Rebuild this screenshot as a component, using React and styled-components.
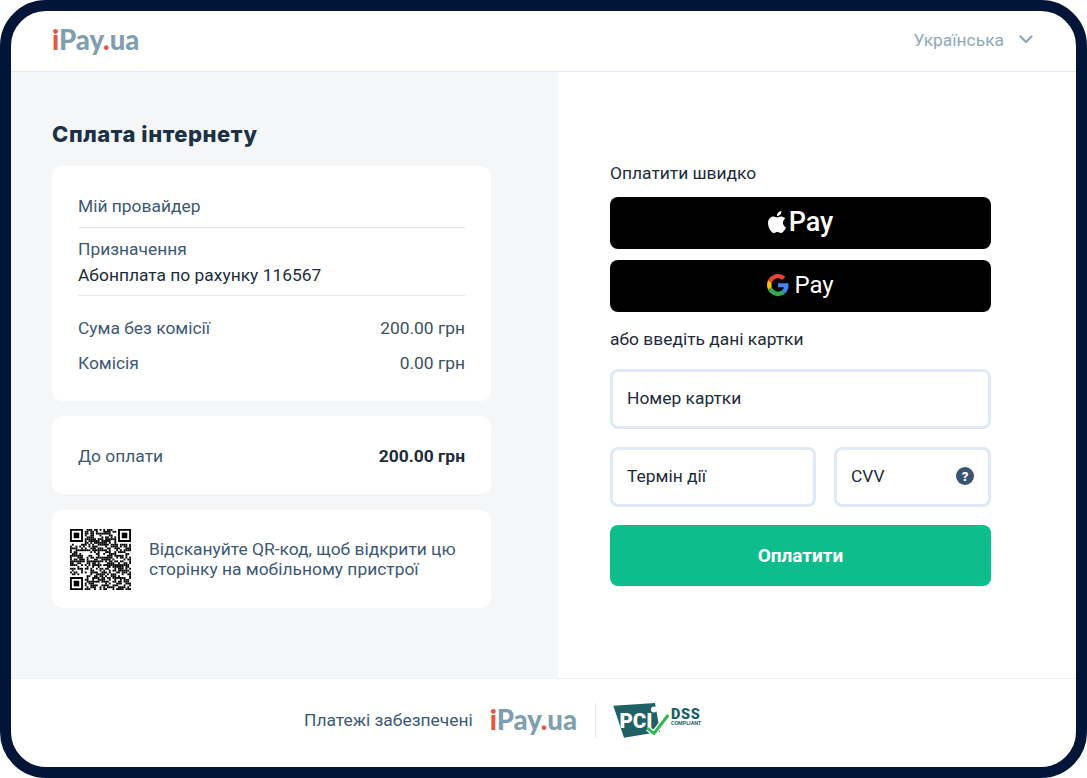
import React from "react";
import styled, { createGlobalStyle } from "styled-components";

const Global = createGlobalStyle`
  html, body { margin: 0; padding: 0; background: #fff; }
  * { box-sizing: border-box; }
  body { font-family: Roboto, "Liberation Sans", sans-serif; color: #1d2b3a; }
`;
const Frame = styled.div`
  width: 1087px; height: 778px; border: 11px solid #001537; border-radius: 46px;
  display: flex; flex-direction: column; overflow: hidden; background: #fff;
`;
const Header = styled.header`
  height: 61px; flex: none; border-bottom: 1px solid #e0e7ee; display: flex;
  align-items: center; justify-content: space-between; padding: 0 43px 3px 41px;
`;
const LogoText = styled.span`
  font-family: Lato, "Noto Sans", sans-serif; font-weight: 900; font-size: 27.500px;
  color: #7f9fb0; line-height: 1;
  b { color: #e8553b; font-weight: 900; }
`;
const Lang = styled.div`
  display: flex; align-items: center; gap: 15px; font-size: 17.400px; color: #8fa9b9;
`;
const Body = styled.main`flex: 1; display: flex; min-height: 0;`;
const Left = styled.section`
  width: 547px; background: #f5f6f8; padding: 49px 67px 0 41px; display: flex; flex-direction: column;
`;
const Title = styled.h1`
  margin: 0 0 19px; font-family: Inter, sans-serif; font-size: 22px; line-height: 26px; font-weight: 800;
  color: #1b3246; letter-spacing: .55px;
`;
const Card = styled.div`
  background: #fff; border-radius: 10px; padding: 0 26px; margin-bottom: ${p => p.$mb}px;
`;
const Row = styled.div`
  display: flex; justify-content: space-between; align-items: center; font-size: 17.400px; line-height: 24px;
  color: #3d5873; height: ${p => p.$h}px; padding: ${p => p.$pad || 0};
  margin-top: ${p => p.$mt || 0}px;
`;
const Divided = styled.div`
  border-bottom: 1px solid #e3e8ed; padding: ${p => p.$pad};
`;
const Label = styled.div`font-size: 17.400px; line-height: 24px; color: #3d5873;`;
const Value = styled.div`font-size: 17.400px; line-height: 28px; color: #1d2b3a;`;
const Strong = styled.span`font-weight: 700; color: #1d2b3a;`;
const Amount = styled.span`color: #3d4f60;`;
const QrCard = styled.div`
  display: flex; align-items: center; gap: 18px; height: 98px; padding: 0 18px; background: #fff; border-radius: 10px;
`;
const QrText = styled.div`font-size: 17.400px; line-height: 20px; color: #3d5873;`;
const Right = styled.section`flex: 1; padding: 89px 85px 0 52px; display: flex; flex-direction: column;`;
const Caption = styled.div`
  font-size: 17.400px; line-height: 24px; color: #1d2b3a; margin-top: ${p => p.$mt || 0}px;
`;
const PayButton = styled.div`
  height: 52px; background: #000; border-radius: 8px; color: #fff; display: flex; align-items: center;
  justify-content: center; margin-top: ${p => p.$mt}px; gap: ${p => p.$gap}px; padding-bottom: 2px;
`;
const PayText = styled.span`
  font-family: Roboto, "Noto Sans", sans-serif; font-size: ${p => p.$size}px; font-weight: ${p => p.$w}; line-height: 1;
`;
const Field = styled.div`
  height: 60px; border: 3px solid #e1e8f5; border-radius: 8px; display: flex; align-items: center;
  justify-content: space-between; padding: 0 14px 2px 14px; font-size: 17.400px; color: #1d2b3a;
  flex: ${p => p.$flex || "none"}; width: ${p => p.$w ? p.$w + "px" : "auto"}; margin-top: ${p => p.$mt || 0}px;
`;
const FieldRow = styled.div`display: flex; gap: 18px; margin-top: 18px;`;
const Submit = styled.div`
  height: 61px; margin-top: 18px; background: #0dbd8b; border-radius: 8px; color: #fff; font-weight: 700;
  font-size: 19px; display: flex; align-items: center; justify-content: center;
`;
const Help = styled.span`
  width: 18px; height: 18px; border-radius: 50%; background: #3a5472; color: #fff; font-size: 13px;
  font-weight: 900; display: flex; align-items: center; justify-content: center; line-height: 1;
`;
const Footer = styled.footer`
  height: 89px; flex: none; border-top: 1px solid #eef1f4; display: flex; align-items: center; justify-content: center;
  padding: 0 80px 6px 0;
`;
const FooterText = styled.span`font-size: 17.400px; color: #3d5873; margin-right: 17px;`;
const Sep = styled.div`width: 1px; height: 35px; background: #e3e8ed; margin: 0 17px 0 18px;`;

function hash(x, y) {
  const s = Math.sin(x * 12.9898 + y * 78.233) * 43758.5453;
  return s - Math.floor(s);
}
function QrCode() {
  const n = 33;
  const cells = [];
  const inFinder = (x, y) => (x < 8 && y < 8) || (x >= n - 8 && y < 8) || (x < 8 && y >= n - 8);
  for (let y = 0; y < n; y++) for (let x = 0; x < n; x++) {
    if (!inFinder(x, y) && hash(x, y) > 0.45) cells.push(<rect key={x + "-" + y} x={x} y={y} width="1" height="1" />);
  }
  const finder = (x, y) => (
    <g key={x + "f" + y}>
      <path fillRule="evenodd" d={`M${x} ${y}h7v7h-7zM${x + 1} ${y + 1}v5h5v-5z`} />
      <rect x={x + 2} y={y + 2} width="3" height="3" />
    </g>
  );
  return (
    <svg width="61" height="61" viewBox="0 0 33 33" fill="#000" style={{ flex: "none" }}>
      {cells}{finder(0, 0)}{finder(26, 0)}{finder(0, 26)}
    </svg>
  );
}
const Apple = () => (
  <svg width="18" height="22" viewBox="0 0 814 1000" fill="#fff">
    <path d="M788 341c-6 4-108 62-108 190 0 148 130 201 134 202-1 3-21 72-69 142-43 62-88 124-156 124s-86-39-164-39c-76 0-103 41-165 41s-106-57-156-127C46 792 0 666 0 546c0-192 125-294 248-294 66 0 120 43 161 43 40 0 101-46 175-46 28 0 130 3 204 92zM555 159c31-37 53-88 53-139 0-7-1-14-2-20-50 2-110 34-146 76-28 32-55 83-55 135 0 8 1 16 2 18 3 1 8 1 13 1 45 0 102-30 135-71z" />
  </svg>
);
const GoogleG = () => (
  <svg width="22" height="22" viewBox="0 0 48 48">
    <path fill="#EA4335" d="M24 9.500c3.500 0 6.700 1.200 9.200 3.600l6.900-6.900C35.900 2.400 30.500 0 24 0 14.600 0 6.500 5.400 2.600 13.200l8 6.200C12.400 13.700 17.700 9.500 24 9.500z" />
    <path fill="#4285F4" d="M46.900 24.500c0-1.600-.1-3.100-.4-4.500H24v9h12.900c-.6 3-2.200 5.500-4.700 7.200l7.700 6c4.500-4.200 7-10.300 7-17.700z" />
    <path fill="#FBBC05" d="M10.500 28.600c-.5-1.400-.8-3-.8-4.600s.3-3.200.8-4.600l-8-6.200C.9 16.500 0 20.100 0 24s.9 7.500 2.600 10.800l7.900-6.200z" />
    <path fill="#34A853" d="M24 48c6.500 0 11.900-2.100 15.900-5.800l-7.700-6c-2.200 1.500-4.900 2.300-8.200 2.300-6.300 0-11.600-4.200-13.500-9.900l-8 6.200C6.500 42.600 14.600 48 24 48z" />
  </svg>
);
const Chevron = () => (
  <svg width="14" height="9" viewBox="0 0 14 9" fill="none" stroke="#8fa9b9" strokeWidth="2.400" strokeLinecap="round" strokeLinejoin="round">
    <path d="M1.500 1.500 7 7l5.500-5.500" />
  </svg>
);
const Pci = () => (
  <svg width="90" height="36" viewBox="0 0 90 36" style={{ display: "block", marginTop: 1 }}>
    <path fill="#1f5f66" d="M.3 2.700 42 0l5 28.700-36 6z" />
    <text x="6.500" y="25" fontFamily="Roboto, sans-serif" fontWeight="900" fontSize="20.500" fill="#fff">PCI</text>
    <ellipse cx="41" cy="6.500" rx="3" ry="3" fill="#fff" />
    <path d="M34.700 25.300 41 30.300 55.300 12" fill="none" stroke="#fff" strokeWidth="5.500" />
    <path d="M34.700 25.300 41 30.300 55.300 12" fill="none" stroke="#2cb84e" strokeWidth="3" />
    <text x="58" y="15.500" fontFamily="Roboto, sans-serif" fontWeight="900" fontSize="14.500" fill="#1f5f66" letterSpacing=".7">DSS</text>
    <text x="58" y="22" fontFamily="Roboto, sans-serif" fontWeight="700" fontSize="5.300" fill="#1f5f66">COMPLIANT</text>
  </svg>
);

export default function App() {
  return (
    <>
      <Global />
      <Frame>
        <Header>
          <LogoText><b>i</b>Pay<b>.</b>ua</LogoText>
          <Lang>Українська<Chevron /></Lang>
        </Header>
        <Body>
          <Left>
            <Title>Сплата інтернету</Title>
            <Card $mb={15}>
              <Divided $pad="28px 0 9px"><Label>Мій провайдер</Label></Divided>
              <Divided $pad="9px 0 6px"><Label>Призначення</Label><Value>Абонплата по рахунку 116567</Value></Divided>
              <Row $h={33} $mt={15}>Сума без комісії<Amount>200.00 грн</Amount></Row>
              <Row $h={57} $pad="0 0 20px">Комісія<Amount>0.00 грн</Amount></Row>
            </Card>
            <Card $mb={16}>
              <Row $h={78} $pad="1px 0 0">До оплати<Strong>200.00 грн</Strong></Row>
            </Card>
            <QrCard>
              <QrCode />
              <QrText>Відскануйте QR-код, щоб відкрити цю<br />сторінку на мобільному пристрої</QrText>
            </QrCard>
          </Left>
          <Right>
            <Caption>Оплатити швидко</Caption>
            <PayButton $mt={12} $gap={3}><Apple /><PayText $size={27} $w={500}>Pay</PayText></PayButton>
            <PayButton $mt={11} $gap={5}><GoogleG /><PayText $size={24} $w={400}>Pay</PayText></PayButton>
            <Caption $mt={15}>або введіть дані картки</Caption>
            <Field $mt={18}>Номер картки</Field>
            <FieldRow>
              <Field $w={206}>Термін дії</Field>
              <Field $flex="1">CVV<Help>?</Help></Field>
            </FieldRow>
            <Submit>Оплатити</Submit>
          </Right>
        </Body>
        <Footer>
          <FooterText>Платежі забезпечені</FooterText>
          <LogoText><b>i</b>Pay<b>.</b>ua</LogoText>
          <Sep />
          <Pci />
        </Footer>
      </Frame>
    </>
  );
}
